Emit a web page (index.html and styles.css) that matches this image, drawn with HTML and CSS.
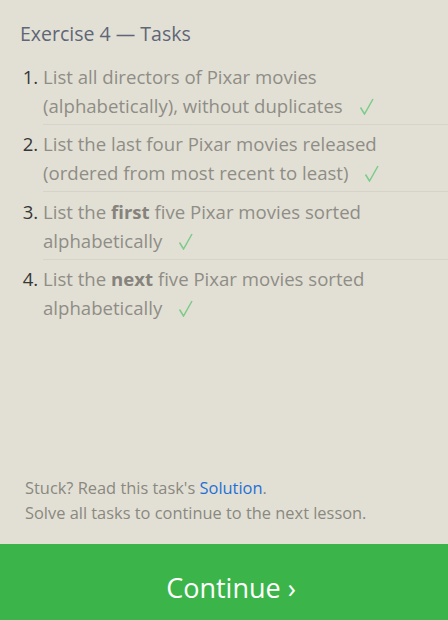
FILE: index.html
```html
<!DOCTYPE html>
<html>
<head>
<meta charset="utf-8">
<link rel="stylesheet" href="styles.css">
</head>
<body>
<div class="page">
  <div class="content">
    <h2 class="title">Exercise 4 — Tasks</h2>
    <ol class="tasks">
      <li class="task">List all directors of Pixar movies (alphabetically), without duplicates <svg class="check" viewBox="0 0 15 17" width="15" height="17"><path d="M1.5 9.5 L5.5 16 L14 1" fill="none" stroke="#7ccb89" stroke-width="1.5"/></svg></li>
      <li class="task">List the last four Pixar movies released (ordered from most recent to least) <svg class="check" viewBox="0 0 15 17" width="15" height="17"><path d="M1.5 9.5 L5.5 16 L14 1" fill="none" stroke="#7ccb89" stroke-width="1.5"/></svg></li>
      <li class="task">List the <b>first</b> five Pixar movies sorted alphabetically <svg class="check" viewBox="0 0 15 17" width="15" height="17"><path d="M1.5 9.5 L5.5 16 L14 1" fill="none" stroke="#7ccb89" stroke-width="1.5"/></svg></li>
      <li class="task last">List the <b>next</b> five Pixar movies sorted alphabetically <svg class="check" viewBox="0 0 15 17" width="15" height="17"><path d="M1.5 9.5 L5.5 16 L14 1" fill="none" stroke="#7ccb89" stroke-width="1.5"/></svg></li>
    </ol>
  </div>
  <div class="footer">
    <p class="note">Stuck? Read this task's <a class="link" href="#">Solution</a>.</p>
    <p class="note">Solve all tasks to continue to the next lesson.</p>
  </div>
  <div class="continue">Continue ›</div>
</div>
</body>
</html>
```
FILE: styles.css
```css
html, body {
  margin: 0;
  padding: 0;
  background: #e2e0d5;
}
.page {
  width: 448px;
  height: 620px;
  display: flex;
  flex-direction: column;
  font-family: "Open Sans", sans-serif;
}
.content {
  flex: 1;
  padding: 19.5px 0 0 20px;
}
.title {
  margin: 0;
  font-size: 19.5px;
  font-weight: 400;
  color: #5e6677;
  line-height: 28px;
}
.tasks {
  margin: 14px 0 0 0;
  padding: 0 0 0 23px;
  list-style: decimal;
}
.task {
  font-size: 18.6px;
  line-height: 29px;
  color: #8f8d86;
  padding: 0 24px 4px 0;
  margin-bottom: 4.5px;
  border-bottom: 1px solid #d6d4ca;
}
.task b {
  color: #85837c;
}
.task::marker {
  color: #363636;
}
.task.last {
  border-bottom: none;
}
.check {
  margin-left: 11px;
  vertical-align: -2px;
}
.footer {
  padding: 0 20px 19px 25px;
}
.note {
  margin: 0;
  font-size: 16.4px;
  line-height: 25px;
  color: #8a8880;
}
.link {
  color: #1f6fd6;
  text-decoration: none;
}
.continue {
  height: 76px;
  box-sizing: border-box;
  padding: 10px 0 0 14px;
  background: #3bb54a;
  color: #fff;
  font-size: 27px;
  display: flex;
  align-items: center;
  justify-content: center;
}
```
